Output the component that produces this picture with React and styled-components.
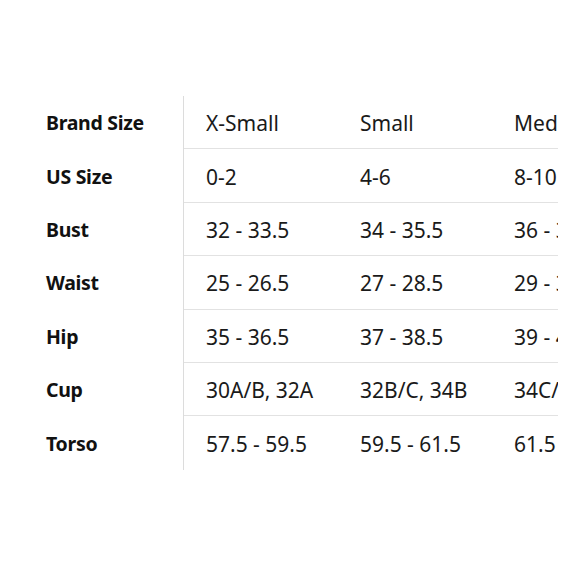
import React from "react";
import styled, { createGlobalStyle } from "styled-components";

const GlobalStyle = createGlobalStyle`
  body {
    margin: 0;
    background: #fff;
    font-family: "Noto Sans", "Open Sans", sans-serif;
  }
`;

const Page = styled.div`
  width: 580px;
  height: 580px;
  padding: 96px 0 0 46px;
  box-sizing: border-box;
`;

const Chart = styled.div`
  display: flex;
  width: 512px;
`;

const Labels = styled.div`
  display: flex;
  flex-direction: column;
  width: 137px;
  flex-shrink: 0;
`;

const Label = styled.div`
  height: 53.4px;
  display: flex;
  align-items: center;
  font-size: 19.5px;
  font-weight: 700;
  color: #111;
  letter-spacing: -0.3px;
`;

const Scroller = styled.div`
  flex: 1;
  overflow: hidden;
  border-left: 1.5px solid #dcdcdc;
`;

const Row = styled.div`
  display: grid;
  grid-template-columns: repeat(3, 154px);
  height: 53.4px;
  box-sizing: border-box;
  border-bottom: ${({ $last }) => ($last ? "none" : "1.5px solid #e2e2e2")};
  width: max-content;
  min-width: 100%;
`;

const Cell = styled.div`
  display: flex;
  align-items: center;
  padding: 2px 0 0 22px;
  font-size: 21px;
  color: #1a1a1a;
  white-space: nowrap;
  overflow: hidden;
`;

const rows = [
  ["Brand Size", ["X-Small", "Small", "Medium"]],
  ["US Size", ["0-2", "4-6", "8-10"]],
  ["Bust", ["32 - 33.5", "34 - 35.5", "36 - 37.5"]],
  ["Waist", ["25 - 26.5", "27 - 28.5", "29 - 30.5"]],
  ["Hip", ["35 - 36.5", "37 - 38.5", "39 - 40.5"]],
  ["Cup", ["30A/B, 32A", "32B/C, 34B", "34C/D, 36B"]],
  ["Torso", ["57.5 - 59.5", "59.5 - 61.5", "61.5 - 63.5"]],
];

export default function App() {
  return (
    <>
      <GlobalStyle />
      <Page>
        <Chart>
          <Labels>
            {rows.map(([label]) => (
              <Label key={label}>{label}</Label>
            ))}
          </Labels>
          <Scroller>
            {rows.map(([label, values], i) => (
              <Row key={label} $last={i === rows.length - 1}>
                {values.map((v) => (
                  <Cell key={v}>{v}</Cell>
                ))}
              </Row>
            ))}
          </Scroller>
        </Chart>
      </Page>
    </>
  );
}
